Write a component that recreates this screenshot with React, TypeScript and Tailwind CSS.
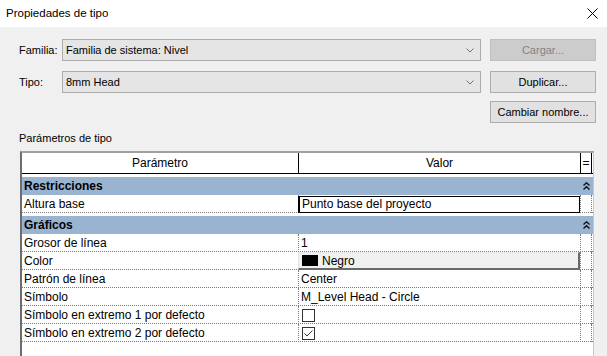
import React from "react";

const ChevronDown = () => (
  <svg width="8" height="5" viewBox="0 0 8 5" className="shrink-0">
    <path d="M0.5 0.5 L4 4 L7.5 0.5" fill="none" stroke="#707070" strokeWidth="1" />
  </svg>
);

const DoubleUp = () => (
  <svg width="7" height="8" viewBox="0 0 7 8">
    <path d="M0.5 3.5 L3.5 0.8 L6.5 3.5 M0.5 7.5 L3.5 4.8 L6.5 7.5" fill="none" stroke="#111" strokeWidth="1.4" />
  </svg>
);

function Combo({ value }: { value: string }) {
  return (
    <div className="flex h-[22px] w-[419px] items-center justify-between border border-[#adadad] bg-[#e5e5e5] pl-[3px] pr-[6px]">
      <span>{value}</span>
      <ChevronDown />
    </div>
  );
}

function Btn({ label, disabled }: { label: string; disabled?: boolean }) {
  return (
    <button
      className={
        disabled
          ? "h-[22px] w-[106px] border border-[#bfbfbf] bg-[#cccccc] text-[#838383]"
          : "h-[22px] w-[106px] border border-[#adadad] bg-[#e1e1e1] text-black"
      }
    >
      {label}
    </button>
  );
}

function Band({ title }: { title: string }) {
  return (
    <div className="mt-[3px] flex h-[18px] items-center justify-between bg-[#99b4d1] pl-[2px] pr-[3px] font-bold">
      <span>{title}</span>
      <DoubleUp />
    </div>
  );
}

function Row({ name, children }: { name: string; children?: React.ReactNode }) {
  return (
    <div className="grid h-[18px] grid-cols-[277px_282px_11px] border-b border-dotted border-[#7a7a7a]">
      <div className="flex items-center border-r border-dotted border-[#7a7a7a] pl-[2px]">{name}</div>
      <div className="flex items-center border-r border-dotted border-[#7a7a7a]">{children}</div>
      <div className="border-r border-dotted border-[#7a7a7a]" />
    </div>
  );
}

export default function App() {
  return (
    <div className="h-[356px] w-[607px] overflow-hidden bg-[#f0f0f0] font-['Liberation_Sans',Arial,sans-serif] text-[11px] text-black">
      {/* title bar */}
      <div className="flex h-[27px] items-center justify-between bg-white pl-[6px] pr-[9px] text-[11.5px]">
        <span>Propiedades de tipo</span>
        <svg width="11" height="11" viewBox="0 0 11 11">
          <path d="M0.5 0.5 L10.5 10.5 M10.5 0.5 L0.5 10.5" stroke="#000" strokeWidth="1" />
        </svg>
      </div>

      <div className="pl-[19px] pr-[11px]">
        <div className="mt-[12px] flex items-center">
          <span className="w-[43px]">Familia:</span>
          <Combo value="Familia de sistema: Nivel" />
          <div className="ml-[9px]">
            <Btn label="Cargar..." disabled />
          </div>
        </div>
        <div className="mt-[10px] flex items-center">
          <span className="w-[43px]">Tipo:</span>
          <Combo value="8mm Head" />
          <div className="ml-[9px]">
            <Btn label="Duplicar..." />
          </div>
        </div>
        <div className="mt-[8px] flex justify-end">
          <Btn label="Cambiar nombre..." />
        </div>

        <div className="mt-[8px] h-[14px] leading-[14px]">Parámetros de tipo</div>

        {/* table */}
        <div className="ml-[1px] mr-[2px] mt-[6px] h-[300px] border-l-2 border-r border-t-2 border-l-[#6d6d6d] border-r-[#c8c8c8] border-t-[#a0a0a0] bg-white text-[12px]">
          <div className="grid h-[21px] grid-cols-[277px_282px_11px] border-b border-black">
            <div className="flex items-center justify-center border-r border-black">Parámetro</div>
            <div className="flex items-center justify-center border-r border-black">Valor</div>
            <div className="flex items-center justify-center border-r border-black">=</div>
          </div>

          <Band title="Restricciones" />
          <Row name="Altura base">
            <div className="ml-[-1px] flex h-[17px] w-[282px] items-center border border-l-2 border-black bg-white pl-[2px]">
              Punto base del proyecto
            </div>
          </Row>

          <Band title="Gráficos" />
          <Row name="Grosor de línea">
            <span className="pl-[2px]">1</span>
          </Row>
          <Row name="Color">
            <div className="ml-[-1px] flex h-[18px] w-[282px] items-center border-b-2 border-r-2 border-l border-t border-b-[#6a6a6a] border-r-[#6a6a6a] border-l-[#e8e8e8] border-t-[#e8e8e8] bg-[#f0f0f0] pl-[3px]">
              <span className="mr-[4px] h-[11px] w-[16px] bg-black" />
              Negro
            </div>
          </Row>
          <Row name="Patrón de línea">
            <span className="pl-[2px]">Center</span>
          </Row>
          <Row name="Símbolo">
            <span className="pl-[2px]">M_Level Head - Circle</span>
          </Row>
          <Row name="Símbolo en extremo 1 por defecto">
            <span className="ml-[3px] h-[13px] w-[13px] border border-[#333] bg-white" />
          </Row>
          <Row name="Símbolo en extremo 2 por defecto">
            <span className="ml-[3px] flex h-[13px] w-[13px] items-center justify-center border border-[#333] bg-white">
              <svg width="9" height="7" viewBox="0 0 9 7">
                <path d="M0.5 3.5 L3 6 L8.5 0.5" fill="none" stroke="#333" strokeWidth="1" />
              </svg>
            </span>
          </Row>
        </div>
      </div>
    </div>
  );
}
